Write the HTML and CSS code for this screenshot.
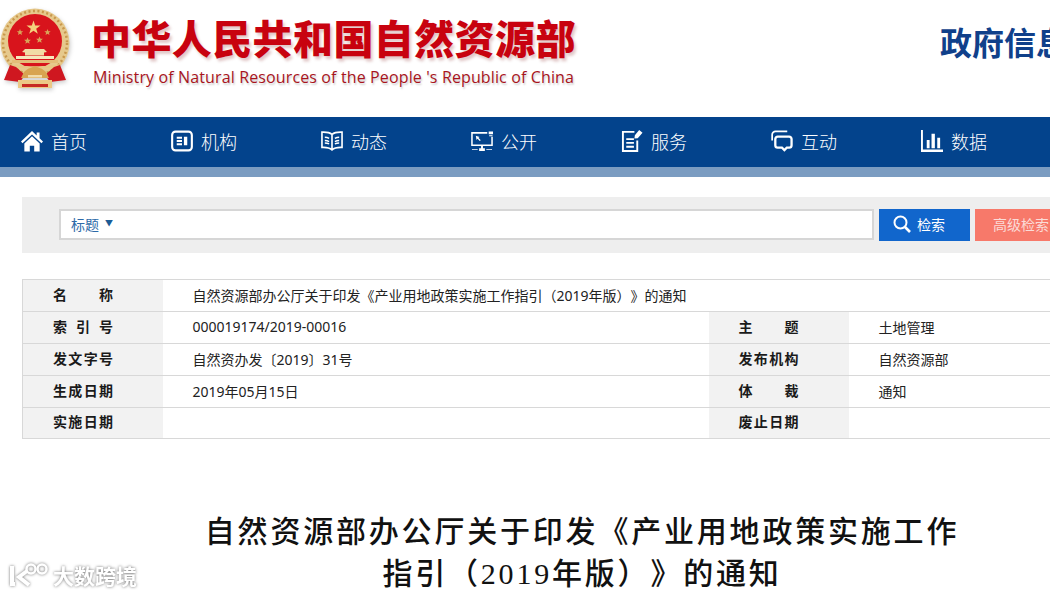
FILE: index.html
```html
<!DOCTYPE html>
<html lang="zh-CN">
<head>
    <meta charset="utf-8">
    <title>自然资源部办公厅关于印发《产业用地政策实施工作指引（2019年版）》的通知</title>
    <link rel="stylesheet" href="styles.css">
</head>
<body>
    <div class="page">
        <header class="header">
            <svg class="emblem" viewBox="0 0 72 90" width="72" height="90" aria-hidden="true">
                <circle cx="35" cy="43" r="34.500" fill="#e6c98c"/>
                <circle cx="35" cy="43" r="32" fill="none" stroke="#c8974c" stroke-width="2.500" stroke-dasharray="2 2.500"/>
                <circle cx="35" cy="41" r="27" fill="#d8141c"/>
                <polygon fill="#f4d27c" points="33.500,20.500 35.200,25.600 40.500,25.600 36.200,28.700 37.800,33.800 33.500,30.700 29.200,33.800 30.800,28.700 26.500,25.600 31.800,25.600"/>
                <polygon fill="#d9a659" points="20,29 20.900,31.200 23.200,31.200 21.400,32.700 22,35 20,33.700 18,35 18.600,32.700 16.800,31.200 19.100,31.200"/>
                <polygon fill="#d9a659" points="47.500,29 48.400,31.200 50.700,31.200 48.900,32.700 49.500,35 47.500,33.700 45.500,35 46.100,32.700 44.300,31.200 46.600,31.200"/>
                <polygon fill="#d9a659" points="27.500,37.500 28.500,39.800 30.900,39.800 29,41.400 29.700,43.800 27.500,42.400 25.300,43.800 26,41.400 24.100,39.800 26.500,39.800"/>
                <polygon fill="#d9a659" points="39.500,36.500 40.500,38.800 42.900,38.800 41,40.400 41.700,42.800 39.500,41.400 37.300,42.800 38,40.400 36.100,38.800 38.500,38.800"/>
                <path fill="#f1dca6" d="M22 52l3-3h19l3 3-3 .5v3H25v-3z"/>
                <path fill="#f6e7bd" d="M16 56h38v3H16z"/>
                <path fill="#e3bd78" d="M12 60h46v3H12z"/>
                <path fill="#e7c684" d="M10 64c8 3 41 3 50 0l-3 4H13z"/>
                <path fill="#cf1720" d="M10 65L4 80l16 2 5-7-9-8zM60 65l6 15-16 2-5-7 9-8z"/>
                <path fill="#ecc986" d="M18 80h34v8H18z"/>
                <path fill="#d8a451" d="M24 72c4-4 7-4 11-6 4 2 7 2 11 6l3 6H21z"/>
                <path fill="#f2dcaa" d="M28 75h14v2.500H28z"/>
                <path fill="#c72a22" d="M22 84h26v3H22z"/>
            </svg>
            <div class="brand">
                <div class="brand-cn">中华人民共和国自然资源部</div>
                <div class="brand-en">Ministry of Natural Resources of the People 's Republic of China</div>
            </div>
            <div class="gov">政府信息公开</div>
        </header>

        <nav class="nav">
            <a class="nav-item">
                <svg class="nav-icon" viewBox="0 0 23 23"><path fill="#fff" d="M11.500 1L0 12l1.600 1.800L11.500 4.600l9.900 9.200L23 12l-3.600-3.400V2.500h-3v3.200z"/><path fill="#fff" d="M11.500 6.600L3.500 14v8.500h5.700v-6h4.600v6h5.700V14z"/></svg>
                <span>首页</span>
            </a>
            <a class="nav-item">
                <svg class="nav-icon" viewBox="0 0 23 23"><rect x="1.200" y="1.700" width="20.600" height="19.600" rx="3.500" fill="none" stroke="#fff" stroke-width="2.200"/><path fill="#fff" d="M6 7h5.500v2.200H6zM6 10.400h5.500v2.200H6zM6 13.800h5.500V16H6zM13.500 7H17v9h-3.500z"/></svg>
                <span>机构</span>
            </a>
            <a class="nav-item">
                <svg class="nav-icon" viewBox="0 0 23 23"><path fill="none" stroke="#fff" stroke-width="1.700" d="M11.500 4.500C9 2.500 5 2 1 2.200v16c4-.2 8 .3 10.500 2.600 2.500-2.300 6.500-2.800 10.500-2.600v-16c-4-.2-8 .3-10.500 2.300zM11.500 4.500v16"/><path fill="none" stroke="#fff" stroke-width="1.500" d="M4 7.500c1.500 0 3 .3 4.500 1.200M4 11c1.500 0 3 .3 4.500 1.200M8.500 14.500c-1.500-.8-3-1-4.500-1M19 7.500c-1.500 0-3 .3-4.500 1.200M19 11c-1.500 0-3 .3-4.500 1.200M14.500 14.500c1.500-.8 3-1 4.500-1"/></svg>
                <span>动态</span>
            </a>
            <a class="nav-item">
                <svg class="nav-icon" viewBox="0 0 23 23"><path fill="none" stroke="#fff" stroke-width="1.600" d="M17 3H1v13h21V7"/><path fill="#fff" d="M18.500 1.500H23v3h-4.500zM19 5.500h3.500v1H19zM5 6l4 1.200-1.200 1 2.400 2.400-1 1L6.800 9.200l-1 1.200zM10.500 16h2v3h-2zM8.500 19h6v3h-6zM1 20h6v1H1zM16 20h6v1h-6z"/></svg>
                <span>公开</span>
            </a>
            <a class="nav-item">
                <svg class="nav-icon" viewBox="0 0 23 23"><path fill="none" stroke="#fff" stroke-width="2" d="M14 2H2v20h15V11"/><path fill="#fff" d="M5.500 8.500h8v2h-8zM5.500 12.500h8v2h-8zM5.500 16.500h8v2h-8zM19 0l3.500 3-5 5.500-3.500.5.500-3.500z"/></svg>
                <span>服务</span>
            </a>
            <a class="nav-item">
                <svg class="nav-icon" viewBox="0 0 23 23"><path fill="none" stroke="#fff" stroke-width="2.400" d="M7 7h12a2.500 2.500 0 0 1 2.500 2.500V16a2.500 2.500 0 0 1-2.500 2.500h-2.500L14 21l-2.500-2.500H7A2.500 2.500 0 0 1 4.500 16V9.500A2.500 2.500 0 0 1 7 7z"/><path fill="none" stroke="#fff" stroke-width="1.800" d="M1.200 11V5a3.500 3.500 0 0 1 3.500-3.500H17"/></svg>
                <span>互动</span>
            </a>
            <a class="nav-item">
                <svg class="nav-icon" viewBox="0 0 23 23"><path fill="#fff" d="M0 0h2v20.500h21V23H0zM6 10.500h3V19H6zM11 4h3.500v15H11zM17 8h3v11h-3z"/></svg>
                <span>数据</span>
            </a>
        </nav>
        <div class="nav-band"></div>

        <main class="main">
            <form class="search">
                <div class="search-box">
                    <span class="search-type">标题</span>
                    <span class="search-arrow">▼</span>
                </div>
                <button class="btn btn-search" type="button">
                    <svg viewBox="0 0 18 18" width="18" height="18"><circle cx="7.500" cy="7.500" r="6" fill="none" stroke="#fff" stroke-width="2"/><path d="M12 12l5 5" stroke="#fff" stroke-width="2.600"/></svg>
                    <span>检索</span>
                </button>
                <button class="btn btn-advanced" type="button">高级检索</button>
            </form>

            <table class="info">
                <colgroup>
                    <col class="col-label">
                    <col class="col-value">
                    <col class="col-label-2">
                    <col>
                </colgroup>
                <tr>
                    <th><span class="spread">名称</span></th>
                    <td colspan="3">自然资源部办公厅关于印发《产业用地政策实施工作指引（2019年版）》的通知</td>
                </tr>
                <tr>
                    <th><span class="spread">索引号</span></th>
                    <td>000019174/2019-00016</td>
                    <th><span class="spread">主题</span></th>
                    <td>土地管理</td>
                </tr>
                <tr>
                    <th><span class="spread">发文字号</span></th>
                    <td>自然资办发〔2019〕31号</td>
                    <th><span class="spread">发布机构</span></th>
                    <td>自然资源部</td>
                </tr>
                <tr>
                    <th><span class="spread">生成日期</span></th>
                    <td>2019年05月15日</td>
                    <th><span class="spread">体裁</span></th>
                    <td>通知</td>
                </tr>
                <tr class="row-last">
                    <th><span class="spread">实施日期</span></th>
                    <td></td>
                    <th><span class="spread">废止日期</span></th>
                    <td></td>
                </tr>
            </table>

            <h1 class="doc-title">自然资源部办公厅关于印发《产业用地政策实施工作指引（2019年版）》的通知</h1>
        </main>
    </div>

    <div class="watermark">
        <svg viewBox="0 0 40 26" width="40" height="26"><path fill="none" stroke="#fff" stroke-width="4" d="M3 4v18h3M18 9L10 15l10 8"/><circle cx="22" cy="7" r="4.500" fill="none" stroke="#fff" stroke-width="2.500"/><circle cx="33" cy="7" r="4.500" fill="none" stroke="#fff" stroke-width="2.500"/></svg>
        <span>大数跨境</span>
    </div>
</body>
</html>
```

FILE: styles.css
```css
html {
    overflow: hidden;
}
body {
    margin: 0;
    width: 1050px;
    height: 593px;
    overflow: hidden;
    position: relative;
    background: #fff;
    color: #222;
    font-family: "Noto Sans", "Noto Sans CJK SC", sans-serif;
    text-spacing-trim: space-all;
}
.page {
    width: 1164px;
}

/* header */
.header {
    display: flex;
    align-items: flex-start;
    height: 117px;
}
.emblem {
    flex-shrink: 0;
    filter: drop-shadow(1px 2px 2px rgba(0, 0, 0, .2));
}
.brand {
    flex-shrink: 0;
    width: 490px;
    margin-left: 19px;
    padding-top: 8px;
}
.brand-cn {
    font-size: 40px;
    line-height: 58px;
    font-weight: 900;
    letter-spacing: .4px;
    color: #c8020f;
    white-space: nowrap;
    text-shadow: 2px 3px 3px rgba(120, 0, 0, .22);
    font-family: "Noto Sans CJK SC", sans-serif;
}
.brand-en {
    margin-left: 2px;
    font-size: 16px;
    line-height: 22px;
    letter-spacing: .13px;
    color: #a8141c;
    white-space: nowrap;
    text-shadow: 1px 2px 2px rgba(0, 0, 0, .2);
    font-family: "Open Sans", sans-serif;
}
.gov {
    flex-shrink: 0;
    margin-left: 359px;
    padding-top: 17px;
    font-size: 32px;
    line-height: 48px;
    font-weight: 700;
    color: #10408a;
    white-space: nowrap;
    font-family: "Noto Sans CJK SC", sans-serif;
}

/* nav */
.nav {
    display: flex;
    height: 50px;
    padding: 0 0 2px 21px;
    box-sizing: border-box;
    background: #03438c;
}
.nav-item {
    display: flex;
    align-items: center;
    gap: 8px;
    width: 150px;
    font-size: 18px;
    color: #fff;
    font-family: "Noto Sans CJK SC", sans-serif;
    font-weight: 300;
}
.nav-icon {
    width: 22px;
    height: 22px;
}
.nav-band {
    height: 10px;
    background: #7b9cc1;
}

/* search */
.main {
    width: 1120px;
    margin-left: 22px;
    padding-top: 20px;
}
.search {
    display: flex;
    gap: 5px;
    height: 56px;
    padding: 12px 0 0 37px;
    box-sizing: border-box;
    background: #eeeeee;
}
.search-box {
    display: flex;
    align-items: center;
    gap: 6px;
    width: 815px;
    height: 31px;
    padding: 0 0 2px 10px;
    box-sizing: border-box;
    background: #fff;
    border: 2px solid #d6d6d6;
    font-size: 13px;
}
.search-type {
    font-size: 14px;
    color: #2d6aa8;
}
.search-arrow {
    font-size: 8px;
    color: #1c5c96;
    margin-top: -2px;
}
.btn {
    display: flex;
    align-items: center;
    gap: 6px;
    height: 32px;
    padding: 0 0 2px;
    border: none;
    font-family: inherit;
    font-size: 14px;
    color: #fff;
}
.btn-search {
    width: 91px;
    padding-left: 14px;
    background: #1166cc;
}
.btn-advanced {
    width: 92px;
    padding-left: 18px;
    background: #f7796a;
    color: #fbdcd8;
}

/* info table */
.info {
    width: 100%;
    margin-top: 26px;
    table-layout: fixed;
    border-collapse: collapse;
    border-left: 1px solid #d8d8d8;
    font-size: 14px;
}
.col-label {
    width: 140px;
}
.col-value {
    width: 546px;
}
.col-label-2 {
    width: 140px;
}
.info tr {
    height: 32px;
}
.info .row-last {
    height: 31px;
}
.info th,
.info td {
    padding: 0 0 2px 30px;
    border-top: 1px solid #d8d8d8;
    border-bottom: 1px solid #d8d8d8;
    text-align: left;
    font-weight: 400;
    white-space: nowrap;
}
.info th {
    padding-bottom: 4px;
    background: #f2f2f2;
    font-weight: 700;
    color: #1a1a1a;
}
.spread {
    display: block;
    width: 60px;
    text-align: justify;
    text-align-last: justify;
}

/* title */
.doc-title {
    width: 770px;
    margin: 72px auto 0;
    font-size: 30px;
    line-height: 42px;
    font-weight: 500;
    letter-spacing: 2.8px;
    text-align: center;
    color: #111;
    font-family: "Liberation Serif", "Noto Sans CJK SC", serif;
}

/* watermark over the picture */
.watermark {
    position: absolute;
    left: 9px;
    top: 560px;
    display: flex;
    align-items: center;
    gap: 4px;
    filter: drop-shadow(0 0 1.5px rgba(0, 0, 0, .55));
    color: #fff;
    font-size: 21px;
    font-weight: 700;
    font-family: "Noto Sans CJK SC", sans-serif;
}
```
